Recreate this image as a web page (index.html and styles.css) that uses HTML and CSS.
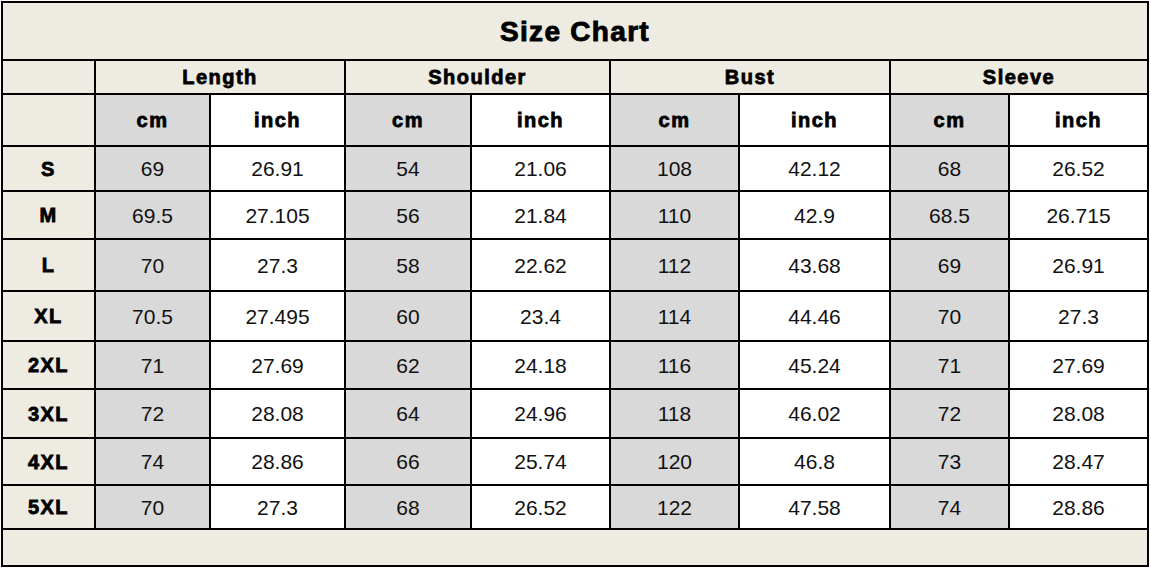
FILE: index.html
```html
<!DOCTYPE html>
<html>
<head>
<meta charset="utf-8">
<link rel="stylesheet" href="styles.css">
</head>
<body>
<div class="chart">
  <div class="cell title span-all">Size Chart</div>

  <div class="cell beige"></div>
  <div class="cell beige head span2">Length</div>
  <div class="cell beige head span2">Shoulder</div>
  <div class="cell beige head span2">Bust</div>
  <div class="cell beige head span2">Sleeve</div>

  <div class="cell beige"></div>
  <div class="cell gray head">cm</div><div class="cell white head">inch</div>
  <div class="cell gray head">cm</div><div class="cell white head">inch</div>
  <div class="cell gray head">cm</div><div class="cell white head">inch</div>
  <div class="cell gray head">cm</div><div class="cell white head">inch</div>

  <div class="cell beige head">S</div>
  <div class="cell gray">69</div><div class="cell white">26.91</div>
  <div class="cell gray">54</div><div class="cell white">21.06</div>
  <div class="cell gray">108</div><div class="cell white">42.12</div>
  <div class="cell gray">68</div><div class="cell white">26.52</div>

  <div class="cell beige head">M</div>
  <div class="cell gray">69.5</div><div class="cell white">27.105</div>
  <div class="cell gray">56</div><div class="cell white">21.84</div>
  <div class="cell gray">110</div><div class="cell white">42.9</div>
  <div class="cell gray">68.5</div><div class="cell white">26.715</div>

  <div class="cell beige head">L</div>
  <div class="cell gray">70</div><div class="cell white">27.3</div>
  <div class="cell gray">58</div><div class="cell white">22.62</div>
  <div class="cell gray">112</div><div class="cell white">43.68</div>
  <div class="cell gray">69</div><div class="cell white">26.91</div>

  <div class="cell beige head">XL</div>
  <div class="cell gray">70.5</div><div class="cell white">27.495</div>
  <div class="cell gray">60</div><div class="cell white">23.4</div>
  <div class="cell gray">114</div><div class="cell white">44.46</div>
  <div class="cell gray">70</div><div class="cell white">27.3</div>

  <div class="cell beige head">2XL</div>
  <div class="cell gray">71</div><div class="cell white">27.69</div>
  <div class="cell gray">62</div><div class="cell white">24.18</div>
  <div class="cell gray">116</div><div class="cell white">45.24</div>
  <div class="cell gray">71</div><div class="cell white">27.69</div>

  <div class="cell beige head">3XL</div>
  <div class="cell gray">72</div><div class="cell white">28.08</div>
  <div class="cell gray">64</div><div class="cell white">24.96</div>
  <div class="cell gray">118</div><div class="cell white">46.02</div>
  <div class="cell gray">72</div><div class="cell white">28.08</div>

  <div class="cell beige head">4XL</div>
  <div class="cell gray">74</div><div class="cell white">28.86</div>
  <div class="cell gray">66</div><div class="cell white">25.74</div>
  <div class="cell gray">120</div><div class="cell white">46.8</div>
  <div class="cell gray">73</div><div class="cell white">28.47</div>

  <div class="cell beige head">5XL</div>
  <div class="cell gray">70</div><div class="cell white">27.3</div>
  <div class="cell gray">68</div><div class="cell white">26.52</div>
  <div class="cell gray">122</div><div class="cell white">47.58</div>
  <div class="cell gray">74</div><div class="cell white">28.86</div>

  <div class="cell beige span-all"></div>
</div>
</body>
</html>
```
FILE: styles.css
```css
html, body {
  margin: 0;
  padding: 0;
  background: #ffffff;
}

.chart {
  margin: 1px 0 0 1px;
  width: 1148px;
  box-sizing: border-box;
  display: grid;
  grid-template-columns: 91px 113px 133px 124px 137px 127px 149px 117px 137px;
  grid-template-rows: 56px 32px 50px 43px 46px 50px 48px 46px 47px 45px 42px 35px;
  gap: 2px;
  padding: 2px;
  background: #000;
  font-family: "Liberation Sans", Arial, sans-serif;
  color: #111;
}

.cell {
  display: flex;
  align-items: center;
  justify-content: center;
  font-size: 21px;
  line-height: 1;
}

.span-all { grid-column: 1 / -1; }
.span2 { grid-column: span 2; }

.title {
  background: #eeebe2;
  font-size: 28px;
  font-weight: 700;
  letter-spacing: 1.3px;
  color: #000;
  -webkit-text-stroke: 0.9px #000;
  padding-top: 2px;
}

.beige { background: #eeebe2; }
.gray { background: #d9d9d9; }
.white { background: #ffffff; }

.head {
  font-weight: 700;
  color: #000;
  letter-spacing: 1.5px;
  -webkit-text-stroke: 0.8px #000;
  font-size: 20px;
}
```
